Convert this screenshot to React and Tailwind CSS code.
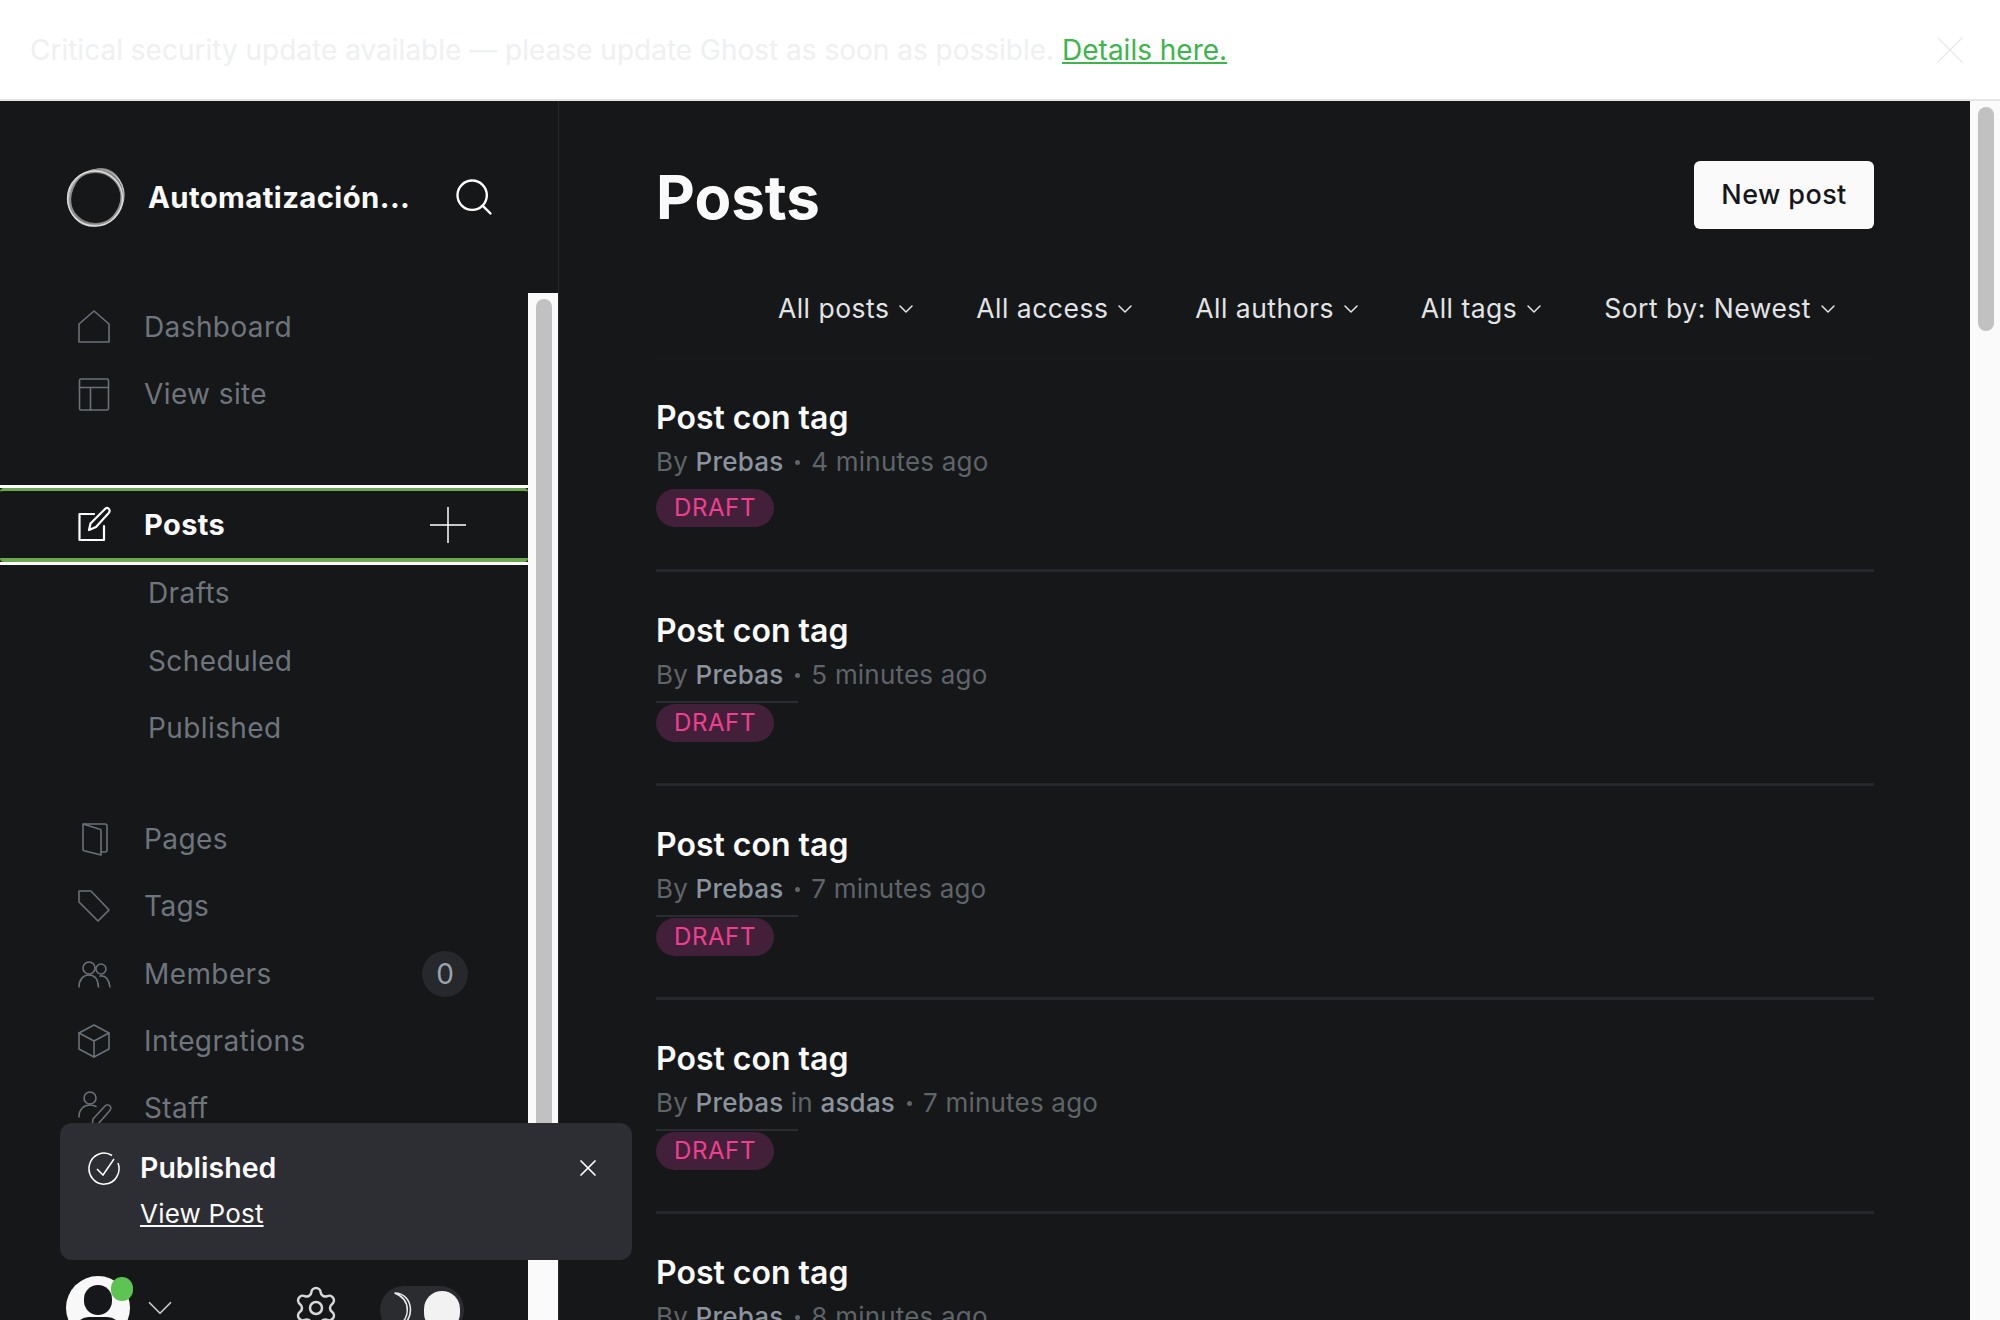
import React from "react";
import { X, ChevronDown, Search, Settings } from "lucide-react";

const font = "font-['Inter',sans-serif]";

const topNav = [
  { name: "Dashboard", icon: "home" },
  { name: "View site", icon: "layout" },
];

const lowerNav = [
  { name: "Pages", icon: "page" },
  { name: "Tags", icon: "tag" },
  { name: "Members", icon: "members", count: 0 },
  { name: "Integrations", icon: "box" },
  { name: "Staff", icon: "staff" },
];

const filters = ["All posts", "All access", "All authors", "All tags", "Sort by: Newest"];

const posts = [
  { time: "4 minutes ago", first: true },
  { time: "5 minutes ago" },
  { time: "7 minutes ago" },
  { time: "7 minutes ago", tag: "asdas" },
  { time: "8 minutes ago" },
];

const NavIcon = ({ type, className }) => {
  const common = {
    width: 36,
    height: 36,
    viewBox: "0 0 36 36",
    fill: "none",
    stroke: "currentColor",
    strokeWidth: 1.6,
    strokeLinejoin: "round",
    strokeLinecap: "round",
    className,
  };
  if (type === "home")
    return (
      <svg {...common}>
        <path d="M3 33V15L18 2l15 13v18z" />
      </svg>
    );
  if (type === "layout")
    return (
      <svg {...common}>
        <rect x="3.5" y="3" width="29" height="31" rx="1.5" />
        <path d="M3.5 11.5h29M14.5 11.5V34" />
      </svg>
    );
  if (type === "edit")
    return (
      <svg {...common} strokeWidth={2.2}>
        <path d="M18 8H3.5v26h24.500V20" />
        <path d="M13 24l1.500-6.500L29 3c1.500-1.500 3-1.500 4 0s1 2.500-.3 4L20 21z" />
      </svg>
    );
  if (type === "page")
    return (
      <svg {...common}>
        <path d="M8 3h21a2 2 0 0 1 2 2v24a2 2 0 0 1-2 2h-4" />
        <path d="M7 3l16 5a2 2 0 0 1 2 2v24l-16-4a2 2 0 0 1-2-2z" />
      </svg>
    );
  if (type === "tag")
    return (
      <svg {...common}>
        <path d="M3 3h12l18 19-11 11L3 14z" />
      </svg>
    );
  if (type === "members")
    return (
      <svg {...common}>
        <circle cx="13" cy="12" r="6" />
        <circle cx="25" cy="13" r="5" />
        <path d="M3 31c0-7 4-12 10-12s9 5 9.500 12" />
        <path d="M24 20c6-1 9 4 10 11" />
      </svg>
    );
  if (type === "box")
    return (
      <svg {...common}>
        <path d="M18 2l15 8v16l-15 8-15-8V10z" />
        <path d="M3 10l15 8 15-8M18 18v16" />
      </svg>
    );
  return (
    <svg {...common}>
      <circle cx="14" cy="8" r="6" />
      <path d="M3 27c0-8 5-12 11-12 2 0 4 .5 6 1.500" />
      <path d="M16 36l1-7 12-13c2-2 4-1 5 0s1 3-.5 5L22 34z" />
    </svg>
  );
};

const Logo = () => (
  <svg width="60" height="60" viewBox="0 0 60 60" fill="none" className="shrink-0 overflow-visible">
    <path d="M27 4c7-6 21-3 27 9 2 4 2 9 2 12-4-9-15-20-29-21z" fill="#6f6f6f" />
    <circle cx="29.500" cy="31" r="26.500" stroke="#808080" strokeWidth="3" />
    <ellipse cx="30" cy="30.500" rx="29.500" ry="26" stroke="#b0b0b0" strokeWidth="1.200" transform="rotate(-55 30 30.500)" />
    <ellipse cx="30" cy="30.500" rx="29" ry="26.500" stroke="#c8c8c8" strokeWidth="1" transform="rotate(-38 30 30.500)" />
    <ellipse cx="30" cy="30.500" rx="28.500" ry="25" stroke="#8e8e8e" strokeWidth="1.500" transform="rotate(-68 30 30.500)" />
    <circle cx="29" cy="31.500" r="27.500" stroke="#dedede" strokeWidth="1.300" />
  </svg>
);

const NavRow = ({ item }) => (
  <div className="flex items-center h-[67.3px] pl-[76px] pr-[60px]">
    <NavIcon type={item.icon} className="text-[#6b7178] shrink-0" />
    <span className="ml-[32px] text-[28px] tracking-[0.4px] text-[#6f757c]">{item.name}</span>
    {item.count !== undefined && (
      <span className="ml-auto flex items-center justify-center w-[46px] h-[46px] rounded-full bg-[#26282c] text-[28px] text-[#9aa3ad]">
        {item.count}
      </span>
    )}
  </div>
);

const DraftBadge = () => (
  <span className="inline-flex items-center h-[38px] px-[18px] rounded-full bg-[#43203a] text-[24px] tracking-[0.6px] text-[#ef3f91]">
    DRAFT
  </span>
);

const PostRow = ({ post }) => (
  <div className="h-[214px] first:h-[213px] border-b-[3px] border-[#26272c] pt-[40px]">
    <div className="text-[32px] leading-[38px] font-semibold text-[#fafafa]">Post con tag</div>
    <div className="mt-[6px] flex items-center text-[26px] leading-[38px] tracking-[0.2px] text-[#5f6469]">
      <span>By&nbsp;</span>
      <span className="font-medium text-[#8b939e]">Prebas</span>
      {post.tag && (
        <>
          <span>&nbsp;in&nbsp;</span>
          <span className="font-medium text-[#8b939e]">{post.tag}</span>
        </>
      )}
      <span className="mx-[11.500px] w-[5px] h-[5px] rounded-full bg-[#5f6469]" />
      <span>{post.time}</span>
    </div>
    {post.first ? (
      <div className="mt-[8px] h-[38px]">
        <DraftBadge />
      </div>
    ) : (
      <>
        <div className="mt-[7px] w-[142px] h-[2px] bg-[#2a2c31]" />
        <div className="mt-[1px] h-[38px]">
          <DraftBadge />
        </div>
      </>
    )}
  </div>
);

export default function App() {
  return (
    <div className={`${font} h-[1320px] overflow-hidden flex flex-col bg-[#161719]`}>
      <div className="relative z-10 h-[101px] shrink-0 bg-white border-b-2 border-[#e5e5e5] flex items-center pl-[30px] pr-[26px]">
        <span className="text-[28px] text-[#eef0f1]">
          Critical security update available — please update Ghost as soon as possible.{" "}
          <a className="text-[#3cb54a] underline">Details here.</a>
        </span>
        <X className="ml-auto text-[#e8e8e8]" size={48} strokeWidth={0.6} />
      </div>

      <div className="relative flex flex-1 min-h-0 -mt-px">
        <aside className="relative w-[559px] shrink-0 border-r border-[#26282f] flex flex-col">
          <div className="h-[193px] shrink-0 flex items-center pl-[66px]">
            <Logo />
            <span className="ml-[22px] pt-[2px] text-[29.300px] font-bold tracking-[0.4px] text-[#fafafa]">Automatización...</span>
            <Search className="ml-[42px] text-white" size={44} strokeWidth={1.3} />
          </div>
          <div className="flex flex-1 min-h-0">
            <div className="flex-1 min-w-0">
              {topNav.map((item) => (
                <NavRow key={item.name} item={item} />
              ))}
              <div className="mt-[57px] h-[80px] border-t-[3px] border-b-[3px] border-white">
                <div className="h-full rounded-[4px] border-t-[3px] border-b-[4px] border-[#6aa84f] flex items-center pl-[76px] pr-[62px]">
                  <NavIcon type="edit" className="text-white shrink-0" />
                  <span className="ml-[32px] pt-[2px] text-[29px] font-bold tracking-[0.4px] text-[#fafafa]">Posts</span>
                  <svg width="36" height="36" viewBox="0 0 36 36" className="ml-auto mt-[1px]" stroke="white" strokeWidth="1.500" fill="none">
                    <path d="M18 0v36M0 18h36" />
                  </svg>
                </div>
              </div>
              <div className="pl-[148px] -mt-[5px]">
                {["Drafts", "Scheduled", "Published"].map((name) => (
                  <div key={name} className="h-[67.3px] flex items-center text-[28px] tracking-[0.4px] text-[#6f757c]">
                    {name}
                  </div>
                ))}
              </div>
              <div className="mt-[44px]">
                {lowerNav.map((item) => (
                  <NavRow key={item.name} item={item} />
                ))}
              </div>
            </div>
            <div className="w-[30px] shrink-0 bg-[#fafafa] pt-[6px] pl-[8px]">
              <div className="w-[16px] h-[960px] rounded-full bg-[#c1c1c1]" />
            </div>
          </div>
          <div className="absolute left-[66px] top-[1176px] w-[64px] h-[64px] rounded-full bg-[#f8f8f8] overflow-hidden">
            <div className="absolute left-[18px] top-[9px] w-[28px] h-[30px] rounded-full bg-[#15171a]" />
            <div className="absolute left-[8px] top-[41px] w-[48px] h-[30px] rounded-full bg-[#15171a]" />
          </div>
          <div className="absolute left-[111px] top-[1177px] w-[22px] h-[24px] rounded-full bg-[#5dc454]" />
          <ChevronDown className="absolute left-[139px] top-[1187px] text-[#c8c8c8]" size={42} strokeWidth={1} />
          <Settings className="absolute left-[292px] top-[1184px] text-[#d8d8d8]" size={48} strokeWidth={1.25} />
          <div className="absolute left-[380px] top-[1186px] w-[84px] h-[48px] rounded-full bg-[#2a2c30] flex items-center pl-[11px]">
            <svg width="22" height="36" viewBox="0 0 20 34" fill="none" stroke="#e8e8e8" strokeWidth="1.500">
              <path d="M3 1c8 3 12 9 12 16s-4 13-12 16c10 0 15-8 15-16S13 1 3 1z" />
            </svg>
            <div className="absolute right-[4px] top-[5px] w-[36px] h-[40px] rounded-full bg-[#f2f2f2]" />
          </div>
        </aside>

        <main className="flex-1 min-w-0 pl-[97px] pr-[96px]">
          <div className="flex items-center justify-between h-[190px]">
            <h1 className="pt-[3px] text-[60px] font-bold text-[#fafafa]">Posts</h1>
            <button className="w-[180px] h-[68px] pt-[1px] rounded-[6px] bg-[#fafafa] text-[#15171a] text-[27px] font-medium tracking-[0.4px]">
              New post
            </button>
          </div>
          <div className="flex justify-end items-center h-[22px] mt-[8px] gap-[57.800px] pr-[34px]">
            {filters.map((f) => (
              <span key={f} className="flex items-center gap-[5px] text-[26.500px] tracking-[0.5px] text-[#e2e4e6]">
                {f}
                <ChevronDown size={24} strokeWidth={1.5} />
              </span>
            ))}
          </div>
          <div className="mt-[38px] border-t border-[#191b1e]">
            {posts.map((post, i) => (
              <PostRow key={i} post={post} />
            ))}
          </div>
        </main>

        <div className="w-[30px] shrink-0 bg-[#fafafa] pt-[7px] pl-[8px]">
          <div className="w-[16px] h-[224px] rounded-full bg-[#c1c1c1]" />
        </div>

        <div className="absolute left-[60px] top-[1023px] w-[572px] h-[137px] rounded-[12px] bg-[#2d2e33] text-[#fafafa]">
          <div className="flex items-center pt-[28px] pl-[28px] pr-[30px]">
            <svg width="32" height="34" viewBox="0 0 32 34" fill="none" stroke="white" strokeWidth="1.500">
              <path d="M24 4.500A15 15.500 0 1 0 30 12" />
              <path d="M9 18l6 6L26 8" />
            </svg>
            <span className="ml-[20px] text-[28.500px] font-semibold leading-[32px]">Published</span>
            <X className="ml-auto" size={28} strokeWidth={1.5} />
          </div>
          <div className="ml-[80px] mt-[9px] text-[26px] underline tracking-[0.2px]">View Post</div>
        </div>
      </div>
    </div>
  );
}
